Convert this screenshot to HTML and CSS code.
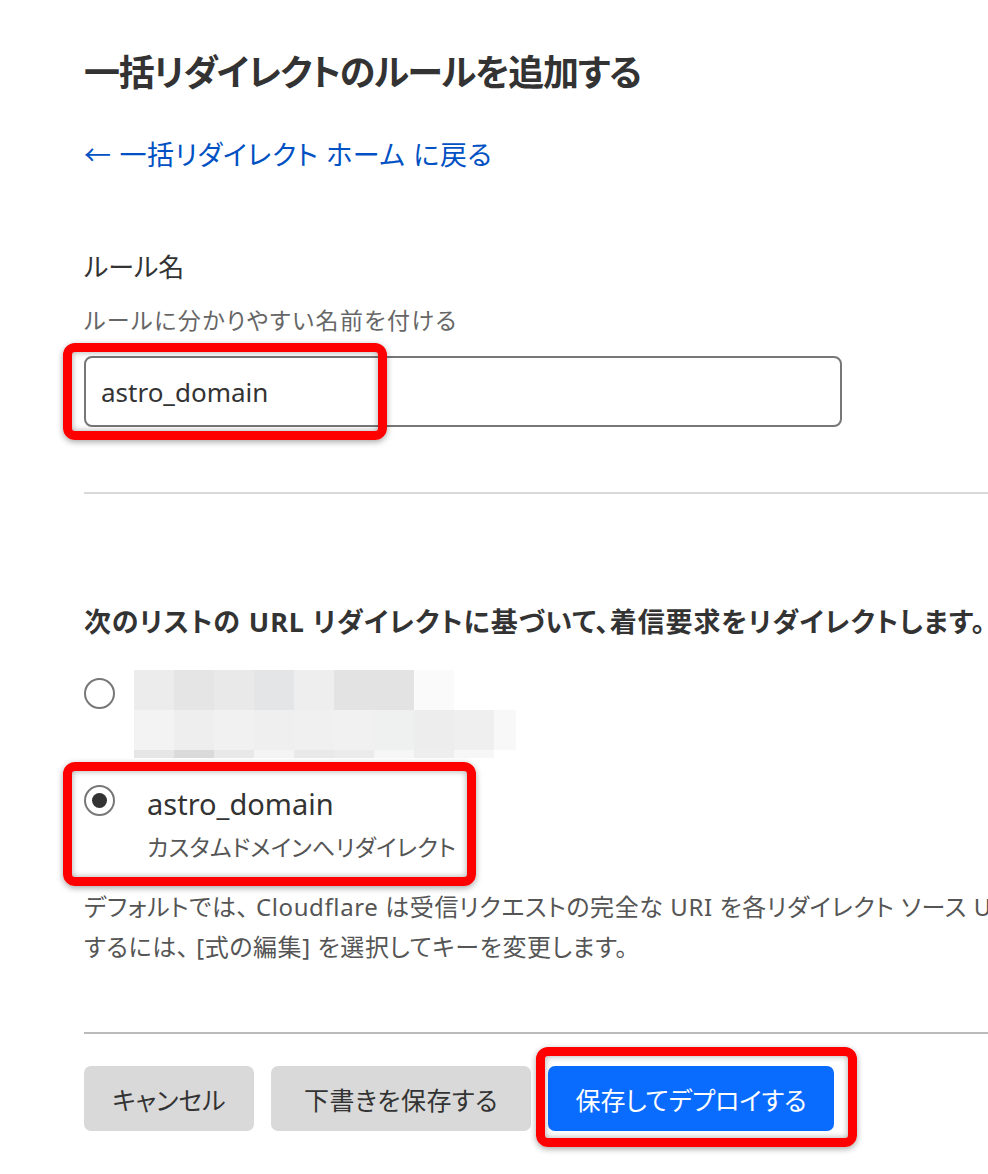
FILE: index.html
```html
<!DOCTYPE html>
<html lang="ja">
<head>
<meta charset="utf-8">
<title>一括リダイレクトのルールを追加する</title>
<link rel="stylesheet" href="styles.css">
</head>
<body>
<main class="page">
  <h1 class="title">一括リダイレクトのルールを追加する</h1>
  <a class="back" href="#">← 一括リダイレクト ホーム に戻る</a>

  <section class="field">
    <div class="label">ルール名</div>
    <div class="hint">ルールに分かりやすい名前を付ける</div>
    <div class="input-wrap">
      <div class="input">astro_domain</div>
      <span class="mark mark-input"></span>
    </div>
  </section>

  <hr class="divider divider-light">

  <section class="list">
    <h2 class="list-title">次のリストの URL リダイレクトに基づいて、着信要求をリダイレクトします。</h2>

    <div class="option option-blur">
      <span class="radio"></span>
      <div class="blur">
        <div class="blur-row row1"></div>
        <div class="blur-row row2"></div>
        <div class="blur-row row3"></div>
      </div>
    </div>

    <div class="option option-checked">
      <span class="radio checked"></span>
      <div class="opt-text">
        <div class="opt-name">astro_domain</div>
        <div class="opt-desc">カスタムドメインへリダイレクト</div>
      </div>
      <span class="mark mark-option"></span>
    </div>

    <p class="note">デフォルトでは、 Cloudflare は受信リクエストの完全な URI を各リダイレクト ソース U<br>するには、 [式の編集] を選択してキーを変更します。</p>
  </section>

  <hr class="divider divider-dark">

  <div class="actions">
    <button class="btn btn-gray btn-cancel" type="button">キャンセル</button>
    <button class="btn btn-gray btn-draft" type="button">下書きを保存する</button>
    <div class="btn-wrap">
      <button class="btn btn-primary btn-deploy" type="button">保存してデプロイする</button>
      <span class="mark mark-button"></span>
    </div>
  </div>
</main>
</body>
</html>
```

FILE: styles.css
```css
html, body {
  margin: 0;
  padding: 0;
  background: #ffffff;
  overflow: hidden;
}

body {
  width: 988px;
  height: 1174px;
  font-family: "Noto Sans", "Noto Sans CJK JP", sans-serif;
  font-feature-settings: "palt";
  color: #333333;
}

.page {
  padding: 49px 0 0 84px;
  overflow: hidden;
  height: 1125px;
}

.title {
  margin: 0;
  font-size: 36px;
  line-height: 48px;
  font-weight: 700;
  letter-spacing: -1.3px;
  color: #333333;
  white-space: nowrap;
}

.back {
  display: block;
  margin-top: 40px;
  font-size: 27px;
  line-height: 36px;
  letter-spacing: 0.7px;
  color: #0051c3;
  text-decoration: none;
  white-space: nowrap;
}

.field {
  margin-top: 76px;
}

.label {
  font-size: 26px;
  line-height: 36px;
  color: #333333;
}

.hint {
  margin-top: 19px;
  font-size: 23px;
  line-height: 32px;
  letter-spacing: 1.5px;
  color: #666666;
}

.input-wrap {
  position: relative;
  margin-top: 20px;
  width: 758px;
}

.input {
  box-sizing: border-box;
  height: 71px;
  border: 2px solid #777777;
  border-radius: 8px;
  padding: 0 15px;
  display: flex;
  align-items: center;
  font-size: 26px;
  color: #333333;
}

.mark {
  position: absolute;
  box-sizing: border-box;
  border: 9px solid #ff0000;
  border-radius: 12px;
  box-shadow: 0 2px 6px rgba(0, 0, 0, 0.35), inset 0 0 6px rgba(0, 0, 0, 0.35);
  pointer-events: none;
}

.mark-input {
  left: -21px;
  top: -13px;
  width: 324px;
  height: 97px;
}

.divider {
  margin: 0;
  border: 0;
  height: 2px;
}

.divider-light {
  margin-top: 65px;
  background: #d9d9d9;
}

.divider-dark {
  margin-top: 65px;
  background: #bbbbbb;
}

.list {
  margin-top: 110px;
}

.list-title {
  margin: 0;
  font-size: 27px;
  line-height: 36px;
  font-weight: 700;
  letter-spacing: 0.9px;
  color: #333333;
  white-space: nowrap;
}

.option {
  position: relative;
  display: flex;
  align-items: flex-start;
}

.option-blur {
  margin-top: 30px;
}

.radio {
  flex: none;
  box-sizing: border-box;
  width: 31px;
  height: 31px;
  border: 2px solid #777777;
  border-radius: 50%;
  display: flex;
  align-items: center;
  justify-content: center;
}

.option-blur .radio {
  margin-top: 8px;
}

.radio.checked::after {
  content: "";
  width: 15px;
  height: 15px;
  border-radius: 50%;
  background: #333333;
}

.blur {
  margin-left: 19px;
  display: flex;
  flex-direction: column;
}

.blur-row {
  height: 40px;
}

.row1 {
  width: 320px;
  background: linear-gradient(to right,
    #ececec 0 40px, #e5e5e5 40px 80px, #e9e9e9 80px 120px, #e3e5e7 120px 160px,
    #eeeeee 160px 200px, #e3e3e3 200px 240px, #e3e3e3 240px 280px, #fafafa 280px 320px);
}

.row2 {
  width: 382px;
  background: linear-gradient(to right,
    #f3f3f3 0 40px, #eeeeee 40px 80px, #f1f1f1 80px 120px, #efefef 120px 160px,
    #f0f0f0 160px 200px, #f1f1f1 200px 240px, #eff0f0 240px 280px, #ededed 280px 320px,
    #efefef 320px 360px, #f8f8f8 360px 382px);
}

.row3 {
  height: 8px;
  width: 360px;
  background: linear-gradient(to right,
    #e6e6e6 0 40px, #dadada 40px 80px, #e8e8e8 80px 120px, #f4f4f4 120px 160px,
    #e9e9e9 160px 200px, #ebebeb 200px 240px, #f6f6f6 240px 280px, #eeeeee 280px 320px,
    #f7f7f7 320px 360px);
}

.option-checked {
  margin-top: 24px;
}

.option-checked .radio {
  margin-top: 3px;
}

.opt-text {
  margin-left: 32px;
}

.opt-name {
  font-size: 29px;
  line-height: 44px;
  color: #333333;
}

.opt-desc {
  font-size: 23px;
  line-height: 42px;
  letter-spacing: 0.3px;
  color: #555555;
  white-space: nowrap;
}

.mark-option {
  left: -21px;
  top: -20px;
  width: 413px;
  height: 124px;
}

.note {
  margin: 19px 0 0;
  font-size: 24px;
  line-height: 40px;
  letter-spacing: 0.6px;
  color: #555555;
  white-space: nowrap;
}

.actions {
  margin-top: 32px;
  display: flex;
  gap: 17px;
  align-items: flex-start;
}

.btn {
  height: 65px;
  border: 0;
  border-radius: 7px;
  padding: 0;
  font-family: inherit;
  font-feature-settings: "palt";
  font-size: 25px;
  cursor: pointer;
}

.btn-cancel {
  width: 170px;
}

.btn-draft {
  width: 260px;
  letter-spacing: 0.5px;
}

.btn-deploy {
  width: 286px;
}

.btn-gray {
  background: #d9d9d9;
  color: #333333;
}

.btn-wrap {
  position: relative;
}

.btn-primary {
  background: #0a6cff;
  color: #ffffff;
}

.mark-button {
  left: -12px;
  top: -19px;
  width: 321px;
  height: 100px;
}
```
